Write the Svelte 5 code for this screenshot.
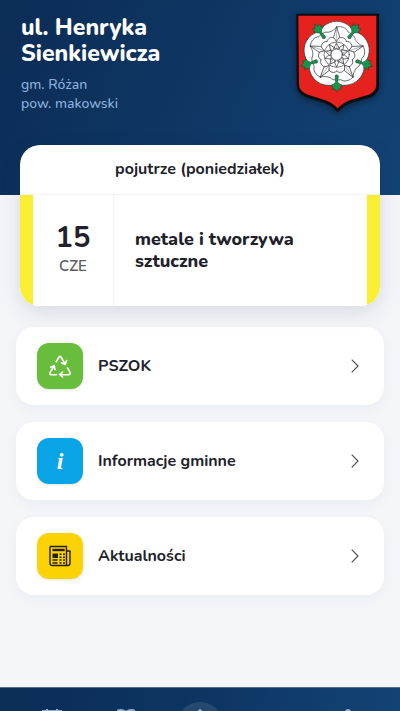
<script>
  const turns = [0, 72, 144, 216, 288];
  const links = [
    { label: 'PSZOK', kind: 'recycle' },
    { label: 'Informacje gminne', kind: 'info' },
    { label: 'Aktualności', kind: 'news' }
  ];
</script>

<div class="page">
  <header>
    <div class="place">
      <h1>ul. Henryka Sienkiewicza</h1>
      <p>gm. Różan</p>
      <p>pow. makowski</p>
    </div>
    <svg class="crest" viewBox="30 36 258 306" role="img" aria-label="Herb gminy Różan">
      <path d="M34 41H282V254Q282 281 258 292L207 306Q178 314 158 337Q138 314 109 306L64 292Q35 281 35 254Z" fill="#0c0d10" />
      <path d="M40 47H274V252Q274 275 251 284L204 298Q176 306 158 325Q140 306 112 298L69 284Q42 275 42 252Z" fill="#e5221d" />
      <g transform="translate(155 164)" stroke="#303236" stroke-width="2" stroke-linejoin="round" stroke-linecap="round">
        {#each turns as t}
          <circle cx="0" cy="-42" r="58" fill="#fff" transform="rotate({t})" />
        {/each}
        <circle r="92" fill="#fff" stroke="none" />
        {#each turns as t}
          <g transform="rotate({t})" fill="none">
            <path d="M0-83C15-87 30-80 34-68C44-63 55-56 56-45C60-39 66-30 79-26" />
            <path d="M-29-40C-26-54-10-55 0-46C10-55 26-54 29-40" />
            <path d="M-9-53L0-84L9-53L0-40Z" fill="#fff" />
            <path d="M0-84V-40" stroke-width="1" />
            <path d="M0-34L9-17H-9Z" fill="#fff" />
            <path d="M0-34V-17" stroke-width="1" />
          </g>
          <g transform="rotate({t + 36})" fill="none">
            <path d="M-8-19L0-37L8-19" />
          </g>
        {/each}
        <circle r="38" fill="none" />
        <circle r="17" fill="#fff" />
        {#each turns as t}
          <path
            transform="rotate({t + 36})"
            d="M-5-63Q0-57 5-63L3-82L9-88L16-91L12-97L14-105L6-102L0-113L-6-102L-14-105L-12-97L-16-91L-9-88L-3-82Z"
            fill="#12964a"
            stroke-width="1.5"
          />
        {/each}
      </g>
    </svg>
  </header>

  <main>
    <section class="pickup">
      <h2>pojutrze (poniedziałek)</h2>
      <div class="event">
        <div class="date"><strong>15</strong><span>CZE</span></div>
        <p>metale i tworzywa sztuczne</p>
      </div>
    </section>

    <div class="links">
      {#each links as link}
        <a href="#{link.kind}">
          <span class="tile {link.kind}">
            {#if link.kind === 'recycle'}
              <svg viewBox="0 0 24 24" fill="none" stroke="#fff" stroke-width="1.6" stroke-linecap="round" stroke-linejoin="round">
                <path d="M8.2 7.8L11 3Q12 1.5 13 3L17 10M18.6 6.5L17.2 10.5L13.5 8.8" />
                <path d="M19.5 13.8L22 18.3Q22.8 20.5 20.8 20.7H12M14.5 18L11.7 20.7L14.5 23" />
                <path d="M8.5 20.7H3.2Q1.2 20.5 2 18.7L6 12M2.5 13.3L6.2 11.7L7 15.5" />
              </svg>
            {:else if link.kind === 'info'}
              <span class="letter" aria-hidden="true">i</span>
            {:else}
              <svg viewBox="0 0 24 24" fill="none" stroke="#262008" stroke-width="1.4" stroke-linejoin="round">
                <path d="M2.5 2.5H18.5V21.5H4.5Q2 21.5 2 19V3ZM19 7H22V19.5Q22 21.5 19.5 21.5H17" />
                <path d="M4.5 6H16.7" stroke-width="2.4" />
                <path d="M4.5 9.5H10V14H4.5Z" fill="#262008" stroke="none" />
                <path d="M11.5 10.2H13.5M15 10.2H17M11.5 13.2H13.5M15 13.2H17M4.5 16H9.5M11.5 16H13.5M15 16H17M4.5 19H9.5M11.5 19H13.5M15 19H17" />
              </svg>
            {/if}
          </span>
          <span class="name">{link.label}</span>
          <svg class="chevron" viewBox="0 0 8 14" fill="none" stroke="#505358" stroke-width="1.2" aria-hidden="true"><path d="M.7.7L7 7L.7 13.3" /></svg>
        </a>
      {/each}
    </div>
  </main>

  <nav aria-label="Menu główne">
    <a href="#kalendarz" aria-label="Kalendarz">
      <svg viewBox="0 0 20 20"><path d="M1 18V2H19V18ZM5 0V4M15 0V4M1 7H19" /></svg>
    </a>
    <a href="#poradnik" aria-label="Poradnik">
      <svg viewBox="0 0 20 20"><path d="M10 3Q6 0 2 1.5V16Q6 14 10 17Q14 14 18 16V1.5Q14 0 10 3V17" /></svg>
    </a>
    <a class="home" href="#start" aria-label="Start">
      <svg viewBox="0 0 20 20"><path d="M1 10L10 1L19 10M4 8V19H16V8" /></svg>
    </a>
    <a class="low" href="#wiadomosci" aria-label="Wiadomości">
      <svg viewBox="0 0 20 20"><path d="M1 3H19V17H1ZL10 11L19 3" /></svg>
    </a>
    <a href="#profil" aria-label="Profil">
      <svg viewBox="0 0 20 20"><circle cx="10" cy="3" r="2" /><path d="M4 19V12Q4 7 10 7Q16 7 16 12V19Z" /></svg>
    </a>
  </nav>
</div>

<style>
  :global(body) {
    margin: 0;
  }
  .page {
    display: flex;
    flex-direction: column;
    height: 100vh;
    overflow: hidden;
    background: #f3f5f9;
    color: #202129;
    font-family: Nunito, Lato, 'Noto Sans', sans-serif;
  }
  h1,
  h2,
  p {
    margin: 0;
  }
  a {
    color: inherit;
    text-decoration: none;
  }
  header {
    display: flex;
    justify-content: space-between;
    align-items: flex-start;
    box-sizing: border-box;
    flex: none;
    height: 195px;
    padding: 12px 19px 0 21px;
    background: linear-gradient(115deg, #0b2c55, #0e3764 50%, #124375);
    color: #fff;
  }
  .place {
    max-width: 180px;
  }
  h1 {
    margin: 3px 0 8px;
    font-size: 23px;
    line-height: 26px;
    font-weight: 800;
  }
  .place p {
    font-size: 14px;
    line-height: 19px;
    font-weight: 500;
    color: #8db0dd;
  }
  .crest {
    width: 86px;
    height: 102px;
    filter: drop-shadow(0 2px 3px #0006);
  }
  main {
    flex: 1;
    min-height: 0;
    padding: 0 16px;
  }
  .pickup {
    position: relative;
    margin: -50px 4px 21px;
    border-radius: 20px;
    background: #fff;
    box-shadow: 0 6px 20px #1c284020;
  }
  h2 {
    padding: 12px 0 13px;
    font-size: 16px;
    line-height: 24px;
    font-weight: 700;
    text-align: center;
  }
  .event {
    display: flex;
    height: 112px;
    padding: 0 13px;
    border-radius: 0 0 20px 20px;
    background: linear-gradient(90deg, #f9ee32 13px, #fff 13px, #fff calc(100% - 13px), #f9ee32 calc(100% - 13px));
    box-shadow: inset 0 1px #f2f3f5;
  }
  .date {
    display: flex;
    flex: 0 0 80px;
    flex-direction: column;
    align-items: center;
    justify-content: center;
    border-right: 1px solid #f0f2f4;
  }
  .date strong {
    font-size: 29px;
    line-height: 32px;
  }
  .date span {
    font-size: 15px;
    line-height: 24px;
    font-weight: 600;
    color: #5b5d62;
  }
  .event p {
    align-self: center;
    max-width: 190px;
    padding-left: 21px;
    font-size: 18px;
    line-height: 22px;
    font-weight: 800;
  }
  .links {
    display: flex;
    flex-direction: column;
    gap: 17px;
  }
  .links a {
    display: flex;
    align-items: center;
    box-sizing: border-box;
    height: 78px;
    padding: 0 25px 0 21px;
    border-radius: 18px;
    background: #fff;
    box-shadow: 0 4px 12px #1c28400a;
  }
  .tile {
    display: grid;
    place-items: center;
    flex: none;
    width: 46px;
    height: 46px;
    margin-right: 15px;
    border-radius: 12px;
    box-shadow: 0 1px 3px #1c284020;
  }
  .tile svg {
    width: 24px;
    height: 24px;
  }
  .recycle {
    background: #68bd3d;
  }
  .info {
    background: #08a4e5;
  }
  .news {
    background: #fbd304;
  }
  .letter {
    color: #fff;
    font: italic bold 24px/24px 'Liberation Serif', serif;
  }
  .name {
    flex: 1;
    font-size: 16px;
    line-height: 24px;
    font-weight: 700;
  }
  .chevron {
    width: 8px;
    height: 14px;
  }
  nav {
    display: flex;
    align-items: flex-start;
    box-sizing: border-box;
    flex: none;
    height: 24px;
    padding: 0 15px;
    overflow: hidden;
    border-top: 1px solid #536d8d;
    background: linear-gradient(100deg, #0b2c55, #0d3562 50%, #124375);
  }
  nav a {
    display: flex;
    flex: 1;
    justify-content: center;
    padding-top: 21px;
  }
  nav .low {
    padding-top: 24px;
  }
  nav .home {
    flex: none;
    box-sizing: border-box;
    width: 46px;
    height: 46px;
    margin: 14px 14px 0;
    padding-top: 7px;
    border-radius: 50%;
    background: #27496f;
  }
  nav svg {
    flex: none;
    width: 20px;
    height: 20px;
    fill: none;
    stroke: #8eafd7;
    stroke-width: 2;
  }
</style>
